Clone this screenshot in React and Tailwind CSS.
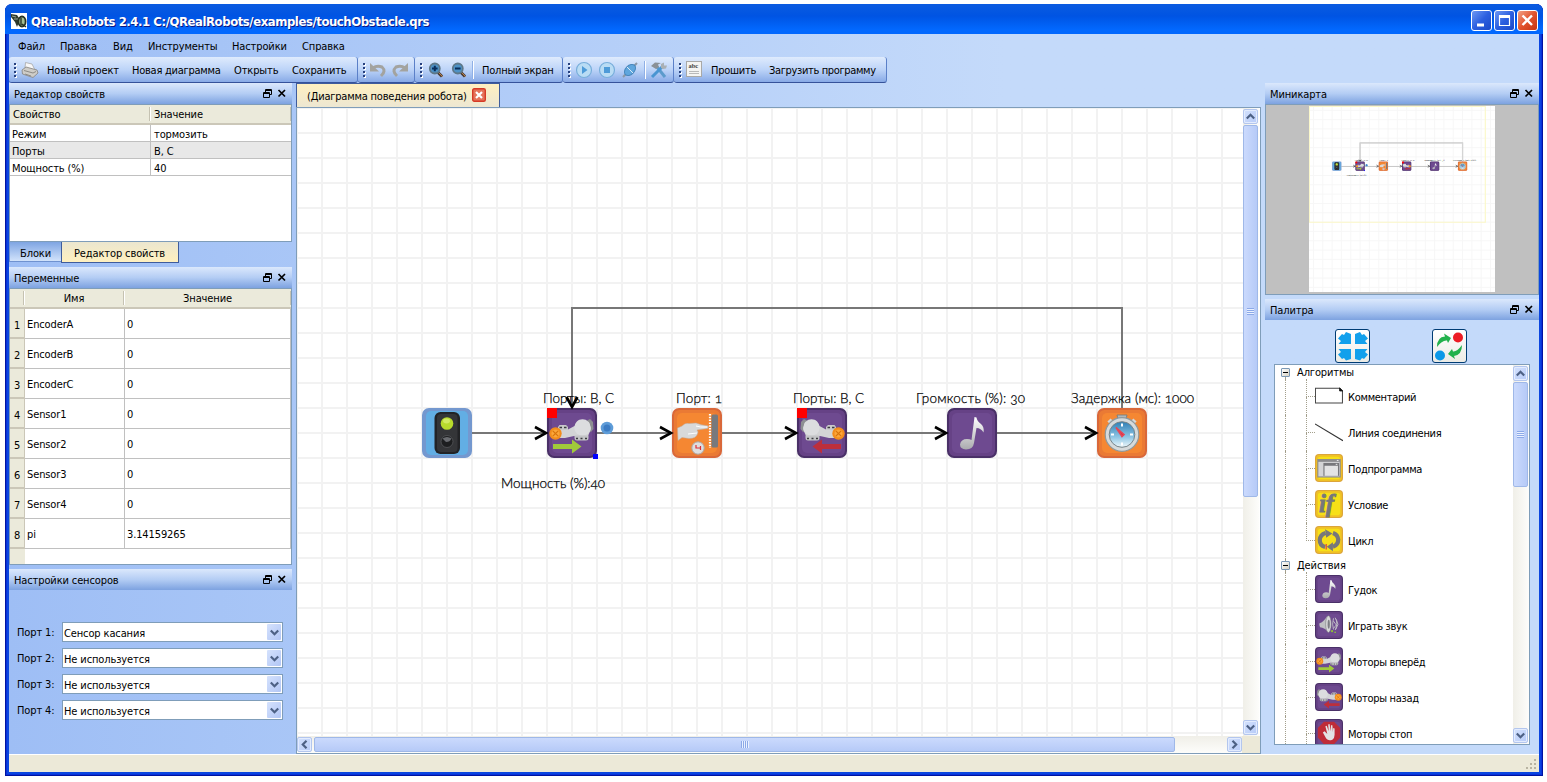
import React from "react";

const Tile = ({ children, base = "#664286", edge = "#4a3068", light = "#75529a" }) => (
  <>
    <rect x="0" y="0" width="50" height="50" rx="7" fill={edge} />
    <rect x="2" y="2" width="46" height="46" rx="5.5" fill={base} />
    <rect x="5" y="5" width="40" height="40" rx="5" fill={light} fillOpacity="0.5" />
    {children}
  </>
);

const Orange = ({ children }) => (
  <Tile base="#ea7a34" edge="#d9683a" light="#ff9430">{children}</Tile>
);

const Yellow = ({ children }) => (
  <Tile base="#efc126" edge="#dca53a" light="#ffff08">{children}</Tile>
);

const LightArt = () => (
  <>
    <rect x="0" y="0" width="50" height="50" rx="7" fill="#7498cf" />
    <rect x="4" y="3" width="42" height="44" rx="5" fill="#62aee4" />
    <rect x="12.5" y="4" width="25.5" height="42" rx="6" fill="#222326" />
    <rect x="15" y="6" width="20.5" height="38" rx="4" fill="#343538" />
    <circle cx="25" cy="15.500" r="6.300" fill="#b8da2c" />
    <ellipse cx="24.500" cy="13" rx="3.500" ry="2.400" fill="#d2ea62" />
    <circle cx="25" cy="33.500" r="6" fill="#1d1e20" stroke="#55575b" strokeWidth="0.8" />
    <path d="M20.500 30.500 Q25 27.500 29.500 30.500 Q28 34 24 34 Z" fill="#696b70" />
  </>
);

const MotorBody = () => (
  <>
    <path d="M11 24 V19 L12.500 17 H19 L21 19 V24 Z" fill="#c9c9cb" />
    <path d="M39 13 L43 11 L46 14 L46.500 21 L44 24 L40 23 Z" fill="#8d8f92" />
    <path d="M10 23 L21 21.500 L27.500 18 L31 12.500 L42 14 L44 21 L41 28 L27 28 L18 30 H10 Z" fill="#d3d4d6" />
    <circle cx="35.500" cy="19.500" r="8.200" fill="#dcdddf" />
    <path d="M27.500 27.500 H41.500 V30 Q41.500 32.500 39 32.500 H30 Q27.500 32.500 27.500 30 Z" fill="#c3c4c6" />
    <path d="M12.500 19.500 H15 M17 19.500 H19.500 M29 30.500 H31 M33.500 30.500 H35.500 M38 30.500 H40" stroke="#3c3c40" strokeWidth="1.500" />
    <circle cx="8.500" cy="25.500" r="6.200" fill="#f28c1c" />
    <circle cx="8.500" cy="25.500" r="4" fill="#fba63a" />
    <path d="M5.800 22.800 L11.200 28.200 M11.200 22.800 L5.800 28.200" stroke="#d8740c" strokeWidth="1.200" />
  </>
);

const ForwardArt = () => (
  <Tile>
    <MotorBody />
    <path d="M6 36 H25 V31.500 L34.500 38.500 L25 45.500 V41 H6 Z" fill="#a0c93a" />
  </Tile>
);

const BackArt = () => (
  <Tile>
    <g transform="translate(50 0) scale(-1 1)">
      <MotorBody />
      <path d="M6 36 H25 V31.500 L34.500 38.500 L25 45.500 V41 H6 Z" fill="#bd2f3c" />
    </g>
  </Tile>
);

const TouchArt = () => (
  <Orange>
    <path d="M5.500 20 L10 18 Q13 14.500 17 15.500 L24 15 Q29 17 35.500 17.800 Q37.500 19 35.500 20.500 L25 22 Q27 24 25.500 26 Q24 30.500 17 30.500 L10 29.500 L6 32.500 Z" fill="#d8d9da" stroke="#bfa89a" strokeWidth="0.500" />
    <path d="M24 18 Q28 19.500 35 19 M16 26 L25 25" stroke="#ffffff" strokeWidth="1" fill="none" />
    <path d="M38 6 V40" stroke="#ffffff" strokeWidth="2.200" strokeDasharray="1.500 1.300" />
    <rect x="39.500" y="6.500" width="6.500" height="33" rx="1.500" fill="#77797d" />
    <circle cx="26" cy="40" r="6.200" fill="#dededf" stroke="#aaa5a3" />
    <path d="M24 37 V40 H28.500 M28.500 38 V42" fill="none" stroke="#df2f35" strokeWidth="1.200" />
  </Orange>
);

const NoteArt = () => (
  <Tile>
    <defs>
      <linearGradient id="noteMetal" x1="0" y1="0" x2="0" y2="1">
        <stop offset="0" stopColor="#ffffff" />
        <stop offset="1" stopColor="#aaabae" />
      </linearGradient>
    </defs>
    <path d="M27.500 9 L29.500 9.500 Q30 13 34 16 Q37.500 19 36.500 24.500 Q34 20 29.500 20 L27 35 Q26 41.500 19 41.500 Q13 41 13 36.500 Q14 31 20 31 Q23 31 24.500 32 Z" fill="url(#noteMetal)" />
  </Tile>
);

const TimerArt = () => (
  <Orange>
    <defs>
      <linearGradient id="dial" x1="0" y1="0" x2="0" y2="1">
        <stop offset="0" stopColor="#2f7fb6" />
        <stop offset="0.600" stopColor="#8fc6e4" />
        <stop offset="1" stopColor="#eef7fb" />
      </linearGradient>
    </defs>
    <path d="M12 12 L16 16 M38 12 L34 16" stroke="#d4d7d8" strokeWidth="4.500" />
    <path d="M20 7 H30 L29 11 H21 Z" fill="#b1b7b9" stroke="#70787b" strokeWidth="0.800" />
    <circle cx="25" cy="26.500" r="16.800" fill="#d6dadb" stroke="#8f999c" strokeWidth="1.200" />
    <circle cx="25" cy="26.500" r="12.800" fill="url(#dial)" stroke="#778489" strokeWidth="1" />
    <path d="M25 15.500 V18.500 M25 34.500 V37.500 M14 26.500 H17 M33 26.500 H36" stroke="#ffffff" strokeWidth="2" />
    <path d="M19 19.500 L27 26.500 L25 28.500 Z" fill="#d73045" stroke="#e54757" strokeWidth="1.600" />
  </Orange>
);

const SoundArt = () => (
  <Tile>
    <path d="M8 22 Q15 20 22 9 Q27 20 25 38 Q17 30 9 29 Q7 26 8 22 Z" fill="#bfc0c3" />
    <ellipse cx="24" cy="23.500" rx="5" ry="15" fill="#d8d8da" stroke="#77787c" />
    <ellipse cx="24.500" cy="23.500" rx="2" ry="8" fill="#7d7e83" />
    <path d="M33 13 Q30 24 33 33 M36 12 Q42 22 36 34 M33 18 L38 25 L33 31 M38 15 L41 24 L37 33" fill="none" stroke="#c4c4c8" strokeWidth="1.600" />
    <circle cx="30.500" cy="36" r="2" fill="#8fc13a" />
    <circle cx="36" cy="38" r="1.500" fill="#8fc13a" />
  </Tile>
);

const StopArt = () => (
  <Tile>
    <path d="M16 5 H34 L45 16 V33 L34 45 H16 L5 33 V16 Z" fill="#bf2c38" />
    <path d="M17 22 L14 24 L20 35 Q24 40 31 37 Q35 34 35 28 L35 17 L32.500 16 L32 23 L31 11 L28.500 11 L28 22 L26 9 L23.500 10 L24.500 22 L21 12 L18.500 13 L22 27 Z" fill="#e3e3e4" />
  </Tile>
);

const SubArt = () => (
  <Yellow>
    <rect x="4" y="9" width="42" height="33" fill="#8b8b8e" />
    <rect x="6" y="14" width="38" height="26" fill="#d3d3d5" />
    <rect x="15" y="16" width="28" height="23" fill="#77777b" />
    <rect x="17" y="21" width="24" height="18" fill="#e3e3e4" />
    <path d="M39 11.500 H42 M37 18.500 H40" stroke="#fff" strokeWidth="1.500" />
  </Yellow>
);

const IfArt = () => (
  <Yellow>
    <text x="7" y="39" fontFamily="Liberation Serif, serif" fontStyle="italic" fontWeight="bold" fontSize="44" fill="#77777c" stroke="#77777c" strokeWidth="1.500">if</text>
  </Yellow>
);

const CycleArt = () => (
  <Yellow>
    <path d="M18 37.500 Q8.500 35 8.500 25 Q9 15.500 19 12.500 M32 37 Q41.500 34 41.500 24 Q40.500 15.500 32 12.500" fill="none" stroke="#77777b" strokeWidth="7.500" />
    <path d="M18 6 L31 13.500 L20 21 Z M32 29 L21 37 L32 45 Z" fill="#77777b" />
    <path d="M20 32 V42" stroke="#df3545" strokeWidth="2" />
  </Yellow>
);

const CommentArt = () => (
  <>
    <path d="M0.800 11 H44 L49 16 V37.500 H0.800 Z" fill="#fff" stroke="#444" strokeWidth="1.800" />
    <path d="M44 10.500 V16 H49.500 Z" fill="#111" stroke="#111" strokeWidth="1.500" />
  </>
);

const LinkArt = () => <path d="M0 10.500 L50 40.500" stroke="#333" strokeWidth="2" />;

const nodes = [
  { x: 422, Art: LightArt },
  { x: 547, Art: ForwardArt, mark: true },
  { x: 672, Art: TouchArt },
  { x: 797, Art: BackArt, mark: true },
  { x: 947, Art: NoteArt },
  { x: 1097, Art: TimerArt },
];

const links = [
  [472, 546],
  [597, 671],
  [722, 796],
  [847, 946],
  [997, 1096],
];

const labels = [
  { x: 543, y: 403, w: 71, t: "Порты: B, C" },
  { x: 676, y: 403, w: 46, t: "Порт: 1" },
  { x: 793, y: 403, w: 71, t: "Порты: B, C" },
  { x: 916, y: 403, w: 109, t: "Громкость (%): 30" },
  { x: 1071, y: 403, w: 123, t: "Задержка (мс): 1000" },
  { x: 501, y: 488, w: 104, t: "Мощность (%):40" },
];

const Diagram = () => (
  <g>
    {nodes.map(({ x, Art, mark }) => (
      <g key={x} transform={`translate(${x} 408)`}>
        <Art />
        {mark && <rect x="0" y="0" width="10" height="10" fill="#ff0000" />}
      </g>
    ))}
    <rect x="593" y="454" width="5" height="5" fill="#0000ff" />
    {links.map(([a, b]) => (
      <rect key={a} x={a} y="432" width={b - a} height="2" fill="#777777" />
    ))}
    <path d="M1122 408 V308 H572 V406" fill="none" stroke="#777777" strokeWidth="2" />
    {links.map(([a, b]) => (
      <path key={a} d={`M${b - 11} 427 L${b} 433 L${b - 11} 439`} fill="none" stroke="#000" strokeWidth="2.600" />
    ))}
    <path d="M566.500 397 L572 407 L577.500 397" fill="none" stroke="#000" strokeWidth="2.600" />
    <circle cx="607" cy="428" r="6.300" fill="#5e9cd8" />
    <circle cx="607" cy="428" r="3.500" fill="#3c7cc4" />
    {labels.map((l) => (
      <text key={l.x} x={l.x} y={l.y} textLength={l.w} fontSize="13.500" fontWeight="300" fontFamily="Lato, Open Sans, sans-serif" fill="#000" stroke="#000" strokeWidth="0.250" className="oldstyle-nums">{l.t}</text>
    ))}
  </g>
);

const DockTitle = ({ children }) => (
  <div className="flex h-[21px] shrink-0 items-center bg-linear-to-b from-[#dbe8fc] via-[#b4cdf4] to-[#7da2e0] pr-[5px] pl-[5px]">
    <span className="grow pt-px">{children}</span>
    <svg width="24" height="11" viewBox="0 0 24 11" fill="none" stroke="#000" className="mb-px">
      <path d="M2.500 4 V1.500 H8.500 V6.500 H6 M2 2.500 H9" strokeWidth="1" />
      <path d="M0.500 4.500 H6.500 V9.500 H0.500 Z M0 5.500 H7" strokeWidth="1" />
      <path d="M15.500 2 L22 8.500 M22 2 L15.500 8.500" strokeWidth="1.700" />
    </svg>
  </div>
);

const Grip = () => (
  <div className="flex w-[3px] shrink-0 flex-col gap-[2px]">
    {[0, 1, 2, 3].map((i) => (
      <i key={i} className="block size-[2px] bg-[#27417f] shadow-[1px_1px_0_#fff]" />
    ))}
  </div>
);

const Bar = ({ className, children }) => (
  <div className={"flex h-[26px] shrink-0 items-center rounded-[3px] border-r border-b border-r-[#5b80c8] border-b-[#35529a] bg-linear-to-b from-[#dfebfd] via-[#bdd4f8] to-[#88aae6] pl-[5px] " + className}>
    <Grip />
    {children}
  </div>
);

const Arrow = ({ d }) => (
  <svg width="9" height="9" viewBox="0 0 9 9" fill="none" stroke="#4d6185" strokeWidth="2.200">
    <path d={d} />
  </svg>
);
const UP = "M0.800 6.500 L4.500 2.800 L8.200 6.500";
const DOWN = "M0.800 2.500 L4.500 6.200 L8.200 2.500";
const LEFT = "M6.500 0.800 L2.800 4.500 L6.500 8.200";
const RIGHT = "M2.500 0.800 L6.200 4.500 L2.500 8.200";

const ScrollButton = ({ d }) => (
  <div className="flex size-[15px] shrink-0 items-center justify-center rounded-[2px] border border-[#b3c6ee] bg-linear-to-br from-[#d3e1fd] to-[#b7cbf8] shadow-[inset_0_0_0_1px_#e3ecfe]">
    <Arrow d={d} />
  </div>
);

const ZoomIcon = ({ plus }) => (
  <svg width="16" height="16" viewBox="0 0 16 16">
    <path d="M9.500 10 L14 14.500" stroke="#4b3c32" strokeWidth="3" />
    <path d="M10 10 L14.500 14.500" stroke="#bb8048" strokeWidth="1" />
    <circle cx="6.800" cy="6.500" r="5" fill="#4d92c6" stroke="#5e7889" strokeWidth="1.800" />
    <path d={plus ? "M4 6.500 H9.600 M6.800 3.700 V9.300" : "M4 6.500 H9.600"} stroke="#092e5b" strokeWidth="2" />
  </svg>
);

const VerticalScroll = ({ thumb }) => (
  <div className="flex w-[16px] shrink-0 flex-col items-center bg-linear-to-r from-[#f0efe8] to-[#fdfdfb] py-px pr-px">
    <ScrollButton d={UP} />
    <div className={"mt-px flex w-[15px] flex-col items-center justify-center rounded-[2px] border border-[#9fb8e8] bg-linear-to-r from-[#cbdafd] to-[#b6caf7] " + thumb}>
      <span className="h-[7px] w-[7px] bg-[repeating-linear-gradient(180deg,#8ca9e8_0_1px,#eaf1ff_1px_2px)]" />
    </div>
    <div className="grow" />
    <ScrollButton d={DOWN} />
  </div>
);

const PropRow = ({ a, b, shade }) => (
  <div className={"flex h-[17px] items-center border-b border-[#c0c0c0] " + (shade ? "bg-[#e8e8e8]" : "bg-white")}>
    <span className="h-full w-[141px] border-r border-[#c0c0c0] pt-px pl-[2px] leading-[17px]">{a}</span>
    <span className="h-full pt-px pl-[3px] leading-[17px]">{b}</span>
  </div>
);

const vars = [
  ["EncoderA", "0"], ["EncoderB", "0"], ["EncoderC", "0"], ["Sensor1", "0"],
  ["Sensor2", "0"], ["Sensor3", "0"], ["Sensor4", "0"], ["pi", "3.14159265"],
];

const PortRow = ({ label, value }) => (
  <div className="flex items-center">
    <span className="w-[45px] pt-px">{label}</span>
    <div className="flex h-[20px] w-[221px] items-center border border-[#7f9db9] bg-white pr-px pl-px">
      <span className="grow pt-[2px]">{value}</span>
      <div className="flex h-[16px] w-[14px] items-center justify-center rounded-[1px] bg-linear-to-br from-[#d5e2fd] to-[#b2c6f5]">
        <Arrow d={DOWN} />
      </div>
    </div>
  </div>
);

const PaletteHead = ({ children, className, first }) => (
  <div className={"flex shrink-0 items-center " + className}>
    <div className="flex h-full w-[22px] flex-col items-start">
      <div className={"ml-[10px] w-px grow border-l border-dotted " + (first ? "border-transparent" : "border-[#a39f8c]")} />
      <div className="ml-[6px] flex size-[9px] items-center justify-center rounded-[1px] border border-[#7b98b5] bg-linear-to-br from-white to-[#d6d1c2]">
        <i className="h-px w-[5px] bg-black" />
      </div>
      <div className="ml-[10px] w-px grow border-l border-dotted border-[#a39f8c]" />
    </div>
    <span>{children}</span>
  </div>
);

const PaletteItem = ({ Art, label, last }) => (
  <div className="flex h-[36px] shrink-0 items-center">
    <div className="ml-[10px] h-full w-[21px] border-l border-dotted border-[#a39f8c]" />
    <div className="flex h-full w-[9px] flex-col">
      <div className="h-[18px] border-b border-l border-dotted border-[#a39f8c]" />
      <div className={"h-[18px] border-l border-dotted " + (last ? "border-transparent" : "border-[#a39f8c]")} />
    </div>
    <svg width="28" height="28" viewBox="0 0 50 50" className="mb-[2px]"><Art /></svg>
    <span className="pl-[5px] tracking-[-0.3px]">{label}</span>
  </div>
);

const WinButton = ({ className, children }) => (
  <div className={"flex size-[21px] items-center justify-center rounded-[3px] border border-white " + className}>
    <svg width="17" height="17" viewBox="0 0 17 17" fill="none" stroke="#fff">{children}</svg>
  </div>
);

export default function App() {
  return (
    <div className="flex h-[782px] w-[1547px] bg-white pt-[4px] pl-[5px] font-['DejaVu_Sans_Condensed','DejaVu_Sans',sans-serif] text-[11px] leading-[13px] tracking-[-0.12px] whitespace-nowrap text-black [font-stretch:condensed]">
      <div className="flex h-[772px] w-[1538px] flex-col overflow-hidden rounded-t-[7px] bg-[#0a45e0] shadow-[inset_1px_-1px_0_#0014a0,inset_-1px_0_0_#0014a0,inset_2px_-2px_0_#0831d9,inset_-2px_0_0_#0831d9]">
        <header className="flex h-[30px] shrink-0 items-center bg-linear-to-b from-[#0a5ae0] from-5% via-[#0054e3] via-40% to-[#0268fe] to-85% pr-[5px] pl-[6px]">
          <svg width="16" height="16" viewBox="0 0 16 16" className="mt-[3px]">
            <rect width="16" height="16" fill="#fff" />
            <path d="M0 1 L6 2 L8 5 L8 9 L6 14 L4 9 L0 4 Z" fill="#2e3a2c" />
            <path d="M1 3 L5 4 M3 6 L7 6" stroke="#9aa596" />
            <ellipse cx="11" cy="8.500" rx="3.600" ry="5" fill="#a5bf92" stroke="#273323" strokeWidth="1.800" />
            <path d="M10 5 V12 M11 11 L15 14" stroke="#273323" strokeWidth="1.400" />
          </svg>
          <span className="grow pt-[4px] pl-[4px] text-[13px] font-bold tracking-[-0.45px] text-white [text-shadow:1px_1px_0_#0a1883]">QReal:Robots 2.4.1 C:/QRealRobots/examples/touchObstacle.qrs</span>
          <div className="mt-[3px] flex gap-[2px]">
            <WinButton className="bg-linear-to-br from-[#6f97f3] via-[#2c5fe0] to-[#1b49c8]"><path d="M4 13 H11" strokeWidth="3" /></WinButton>
            <WinButton className="bg-linear-to-br from-[#6f97f3] via-[#2c5fe0] to-[#1b49c8]"><path d="M3.500 4 V13.500 H13.500 V4 Z" strokeWidth="1.200" /><path d="M3 4.500 H14" strokeWidth="3" /></WinButton>
            <WinButton className="bg-linear-to-br from-[#f0a084] via-[#e2532c] to-[#c63310]"><path d="M3.500 3.500 L13 13 M13 3.500 L3.500 13" strokeWidth="2.400" /></WinButton>
          </div>
        </header>

        <div className="mx-[4px] mb-[4px] flex h-[738px] flex-col bg-linear-to-r from-[#9ebef5] to-[#c4dafa] to-65%">
          <nav className="flex h-[23px] shrink-0 items-center pt-[2px] pl-[9px]">
            <span className="w-[42px]">Файл</span>
            <span className="w-[53px]">Правка</span>
            <span className="w-[35px]">Вид</span>
            <span className="w-[84px]">Инструменты</span>
            <span className="w-[70px]">Настройки</span>
            <span>Справка</span>
          </nav>

          <div className="flex h-[26px] shrink-0">
            <Bar className="w-[349px]">
              <svg width="18" height="18" viewBox="0 0 18 18" className="ml-[4px]">
                <path d="M4 7 L4.500 1.500 L11 3 L14 9 Z" fill="#f7f7f7" stroke="#a7a7a7" strokeWidth="0.800" />
                <path d="M1 9 L5 6 L16 9 L17 12 L12 16.500 L1.500 13 Z" fill="#cfcdc8" stroke="#85837f" strokeWidth="0.800" />
                <path d="M3 9.500 L12 12 L15 10.500 M4 13 L10 15" stroke="#8d8b86" fill="none" />
              </svg>
              <span className="ml-[8px] w-[85px] pt-[2px]">Новый проект</span>
              <span className="w-[102px] pt-[2px] tracking-[-0.25px]">Новая диаграмма</span>
              <span className="w-[58px] pt-[2px]">Открыть</span>
              <span className="pt-[2px]">Сохранить</span>
            </Bar>
            <Bar className="w-[57px]">
              <svg width="44" height="16" viewBox="0 0 44 16" className="ml-[2px]" fill="none" stroke="#a3a39f" strokeWidth="3">
                <path d="M5 6 Q9 3 14 5 Q18.500 9 13 14" />
                <path d="M2 1 V9.500 H11 Z" fill="#a3a39f" stroke="none" />
                <path d="M37 6 Q33 3 28 5 Q23.500 9 29 14" />
                <path d="M40 1 V9.500 H31 Z" fill="#a3a39f" stroke="none" />
              </svg>
            </Bar>
            <Bar className="w-[148px]">
              <div className="ml-[5px] flex gap-[7px]"><ZoomIcon plus /><ZoomIcon /></div>
              <i className="ml-[5px] h-[18px] w-[2px] border-r border-l border-r-white border-l-[#8fb0e6]" />
              <span className="ml-[8px] pt-[2px] tracking-[-0.2px]">Полный экран</span>
            </Bar>
            <Bar className="w-[111px]">
              <svg width="66" height="18" viewBox="0 0 66 18" className="ml-[4px]">
                <g fill="#b9dcf4" stroke="#78aedb" strokeWidth="1.200">
                  <circle cx="9" cy="9" r="7.500" />
                  <circle cx="32" cy="9" r="7.500" />
                </g>
                <path d="M7 5 L12.500 9 L7 13 Z" fill="#4e9bd8" />
                <rect x="29" y="6" width="6" height="6" fill="#4e9bd8" />
                <path d="M48 16 L52 12 M58 6 L62 2" stroke="#8b98a6" strokeWidth="2" />
                <ellipse cx="55" cy="9" rx="6.500" ry="4.400" transform="rotate(-45 55 9)" fill="#5fa6dd" stroke="#4787bd" />
                <path d="M52 6 L58 12" stroke="#d8eaf7" />
              </svg>
              <i className="ml-[3px] h-[18px] w-[2px] border-r border-l border-r-white border-l-[#8fb0e6]" />
              <svg width="18" height="18" viewBox="0 0 18 18" className="ml-[4px]" fill="none">
                <path d="M7 6 L15 16" stroke="#5c9bcc" strokeWidth="3" />
                <path d="M1 5 L5 1.500 L11 2 L8 3.500 L9 6 L6 8 Z" fill="#8a9197" />
                <path d="M2 16 L12 6" stroke="#4995d2" strokeWidth="3" />
                <path d="M11 7 L11 3 L14 1.500 L14 4.500 L17 4.500 L16 7.500 L13 8 Z" fill="#a9b0b5" />
              </svg>
            </Bar>
            <Bar className="w-[213px]">
              <svg width="17" height="17" viewBox="0 0 17 17" className="ml-[4px]">
                <rect x="0.500" y="0.500" width="15" height="15" fill="#f4f4f2" stroke="#a9a9a7" />
                <text x="2.500" y="7" fontSize="6.500" fontWeight="bold" fontFamily="Liberation Serif, serif" fill="#444" letterSpacing="0">abc</text>
                <path d="M3 10.500 H13 M3 12.500 H13" stroke="#aaa" strokeWidth="0.800" />
              </svg>
              <span className="ml-[8px] w-[58px] pt-[2px] tracking-[-0.25px]">Прошить</span>
              <span className="pt-[2px] tracking-[-0.35px]">Загрузить программу</span>
            </Bar>
          </div>

          <main className="flex h-[671px] shrink-0">
            <aside className="flex w-[283px] shrink-0 flex-col">
              <DockTitle>Редактор свойств</DockTitle>
              <div className="h-[138px] border border-[#7f9db9] bg-white">
                <div className="flex h-[20px] items-center border-b-2 border-[#cbc7b8] bg-[#ebeadb]">
                  <span className="w-[140px] border-r border-[#c5c2b2] pt-px pl-[3px]">Свойство</span>
                  <span className="grow border-r border-l border-r-[#c5c2b2] border-l-white pt-px pl-[3px]">Значение</span>
                </div>
                <PropRow a="Режим" b="тормозить" />
                <PropRow a="Порты" b="B, C" shade />
                <PropRow a="Мощность (%)" b="40" />
              </div>
              <div className="flex h-[25px]">
                <div className="h-[20px] w-[52px] border-b border-l border-[#6f92d0] bg-linear-to-b from-[#7fa5e2] to-[#d2e3fb] pt-[5px] pl-[10px]">Блоки</div>
                <div className="h-[21px] w-[118px] border border-t-0 border-[#3f5c9c] bg-linear-to-b from-[#ebe6cf] to-[#fff0bf] pt-[5px] pl-[12px]">Редактор свойств</div>
              </div>
              <DockTitle>Переменные</DockTitle>
              <div className="flex h-[277px] flex-col border border-[#7f9db9] bg-white">
                <div className="flex h-[20px] items-center border-b-2 border-[#cbc7b8] bg-[#ebeadb] text-center">
                  <span className="h-[14px] w-[14px] border-r border-[#c5c2b2]" />
                  <span className="h-[14px] w-[100px] border-r border-l border-r-[#c5c2b2] border-l-white pt-px">Имя</span>
                  <span className="h-[14px] grow border-r border-l border-r-[#c5c2b2] border-l-white pt-px">Значение</span>
                </div>
                {vars.map(([n, v], i) => (
                  <div key={n} className="flex h-[30px] shrink-0">
                    <div className="flex w-[15px] items-center justify-center border-r border-b-2 border-[#cbc7b8] bg-[#ebeadb] pt-[4px]">{i + 1}</div>
                    <div className="flex w-[100px] items-center border-r border-b border-[#c0c0c0] pt-[2px] pl-[2px]">{n}</div>
                    <div className="flex grow items-center border-r border-b border-[#c0c0c0] pt-[2px] pl-[2px]">{v}</div>
                  </div>
                ))}
                <div className="w-[15px] grow bg-[#ebeadb]" />
              </div>
              <div className="mt-[4px] flex flex-col">
                <DockTitle>Настройки сенсоров</DockTitle>
                <div className="flex flex-col gap-[6px] pt-[32px] pl-[8px]">
                  <PortRow label="Порт 1:" value="Сенсор касания" />
                  <PortRow label="Порт 2:" value="Не используется" />
                  <PortRow label="Порт 3:" value="Не используется" />
                  <PortRow label="Порт 4:" value="Не используется" />
                </div>
              </div>
            </aside>

            <section className="ml-[4px] flex w-[965px] shrink-0 flex-col">
              <div className="flex h-[24px] w-[204px] shrink-0 items-center border border-b-0 border-[#3f5c9c] bg-linear-to-b from-[#fff0c0] to-[#ede7d2] pl-[10px]">
                <span className="w-[165px] pt-px tracking-[-0.2px]">(Диаграмма поведения робота)</span>
                <svg width="14" height="14" viewBox="0 0 14 14" className="mb-px">
                  <rect x="0.700" y="0.700" width="12.600" height="12.600" rx="1.500" fill="#e4735a" stroke="#d63a26" strokeWidth="1.400" />
                  <path d="M4 4 L10 10 M10 4 L4 10" stroke="#fff" strokeWidth="2.200" />
                </svg>
              </div>
              <div className="flex h-[647px] flex-col border border-[#7f9db9] bg-white">
                <div className="flex h-[628px] shrink-0">
                  <div className="w-[946px] bg-[linear-gradient(90deg,transparent_23px,#f2f2f2_23px),linear-gradient(180deg,transparent_23px,#f2f2f2_23px)] bg-size-[25px_25px] bg-position-[1px_1px]">
                    <svg width="946" height="628" viewBox="297 108 946 628"><Diagram /></svg>
                  </div>
                  <VerticalScroll thumb="h-[372px]" />
                </div>
                <div className="flex h-[17px] items-center bg-[#ece9d8]">
                  <div className="flex h-[17px] w-[945px] items-center bg-linear-to-b from-[#f0efe8] to-[#fdfdfb] pb-px">
                    <ScrollButton d={LEFT} />
                    <div className="ml-[2px] flex h-[15px] w-[861px] items-center justify-center rounded-[2px] border border-[#9fb8e8] bg-linear-to-b from-[#cbdafd] to-[#b6caf7]">
                      <span className="h-[7px] w-[8px] bg-[repeating-linear-gradient(90deg,#8ca9e8_0_1px,#eaf1ff_1px_2px)]" />
                    </div>
                    <div className="grow" />
                    <ScrollButton d={RIGHT} />
                  </div>
                </div>
              </div>
            </section>

            <aside className="ml-[4px] flex w-[274px] shrink-0 flex-col">
              <DockTitle>Миникарта</DockTitle>
              <div className="flex h-[191px] shrink-0 justify-center border border-[#7f9db9] bg-[#c0c0c0] pt-px pr-px">
                <svg width="186" height="186" viewBox="298 110 998 998" className="bg-white">
                  <path d="M298 133 H1296 M298 183 H1296 M298 233 H1296 M298 283 H1296 M298 333 H1296 M298 383 H1296 M298 433 H1296 M298 483 H1296 M298 533 H1296 M298 583 H1296 M298 633 H1296 M298 683 H1296 M298 733 H1296 M298 783 H1296 M298 833 H1296 M298 883 H1296 M298 933 H1296 M298 983 H1296 M298 1033 H1296 M298 1083 H1296" stroke="#f6f6f6" strokeWidth="5" />
                  <path d="M322 105 V1108 M372 105 V1108 M422 105 V1108 M472 105 V1108 M522 105 V1108 M572 105 V1108 M622 105 V1108 M672 105 V1108 M722 105 V1108 M772 105 V1108 M822 105 V1108 M872 105 V1108 M922 105 V1108 M972 105 V1108 M1022 105 V1108 M1072 105 V1108 M1122 105 V1108 M1172 105 V1108 M1222 105 V1108 M1272 105 V1108" stroke="#f6f6f6" strokeWidth="5" />
                  <path d="M300 112 H1244 V734 H300 Z" fill="none" stroke="#fbf8c8" strokeWidth="6" />
                  <Diagram />
                  <path d="M1122 405 V308 H572 V400" fill="none" stroke="#d4d4d4" strokeWidth="7" />
                </svg>
              </div>
              <div className="mt-[4px] flex flex-col">
                <DockTitle>Палитра</DockTitle>
                <div className="flex h-[44px] gap-[62px] pt-[9px] pl-[70px]">
                  <div className="flex h-[34px] w-[35px] shrink-0 items-center justify-center rounded-[3px] border border-[#003c74] bg-linear-to-b from-white to-[#ecebe5]">
                    <svg width="31" height="30" viewBox="0 0 31 30" fill="#12a0ec">
                      <path d="M14 13 H1.500 L4 10 L1 7.500 L5 3 L7 4 L9 1 L14 3 Z" />
                      <path d="M18 13 H30.500 L28 10 L31 7.500 L27 3 L25 4 L23 1 L18 3 Z" />
                      <path d="M14 18 H1.500 L4 21 L1 23.500 L5 28 L7 27 L9 29.500 L14 28 Z" />
                      <path d="M18 18 H30.500 L28 21 L31 23.500 L27 28 L25 27 L23 29.500 L18 28 Z" />
                    </svg>
                  </div>
                  <div className="flex h-[34px] w-[35px] shrink-0 items-center justify-center rounded-[3px] border border-[#003c74] bg-linear-to-b from-white to-[#ecebe5]">
                    <svg width="31" height="30" viewBox="0 0 31 30">
                      <circle cx="24" cy="6.500" r="5" fill="#ed1c24" />
                      <circle cx="6" cy="24.500" r="5" fill="#0c98e8" />
                      <path d="M3 16 Q3 6 11 5.500 L10 2.500 L17 7 L14 12 L13 9.500 Q8 9 3 16 Z M28 14 Q28 24 20 25 L21 28 L14 23 L18 18 L19 20.500 Q23 21 28 14 Z" fill="#22b14c" />
                    </svg>
                  </div>
                </div>
                <div className="ml-[9px] flex h-[381px] w-[256px] border border-[#7f9db9] bg-white">
                  <div className="flex w-[238px] flex-col overflow-hidden">
                    <PaletteHead first className="h-[14px]">Алгоритмы</PaletteHead>
                    <PaletteItem Art={CommentArt} label="Комментарий" />
                    <PaletteItem Art={LinkArt} label="Линия соединения" />
                    <PaletteItem Art={SubArt} label="Подпрограмма" />
                    <PaletteItem Art={IfArt} label="Условие" />
                    <PaletteItem Art={CycleArt} label="Цикл" last />
                    <PaletteHead className="h-[13px]">Действия</PaletteHead>
                    <PaletteItem Art={NoteArt} label="Гудок" />
                    <PaletteItem Art={SoundArt} label="Играть звук" />
                    <PaletteItem Art={ForwardArt} label="Моторы вперёд" />
                    <PaletteItem Art={BackArt} label="Моторы назад" />
                    <PaletteItem Art={StopArt} label="Моторы стоп" />
                  </div>
                  <VerticalScroll thumb="h-[105px]" />
                </div>
              </div>
            </aside>
          </main>

          <footer className="flex h-[18px] shrink-0 items-end justify-end border-t border-white bg-[#ece9d8] pr-[2px] pb-[2px]">
            <svg width="12" height="12" viewBox="0 0 12 12" fill="#b8b4a2">
              <path d="M9 1 h2 v2 h-2 Z M9 5 h2 v2 h-2 Z M5 5 h2 v2 h-2 Z M9 9 h2 v2 h-2 Z M5 9 h2 v2 h-2 Z M1 9 h2 v2 h-2 Z" />
            </svg>
          </footer>
        </div>
      </div>
    </div>
  );
}
